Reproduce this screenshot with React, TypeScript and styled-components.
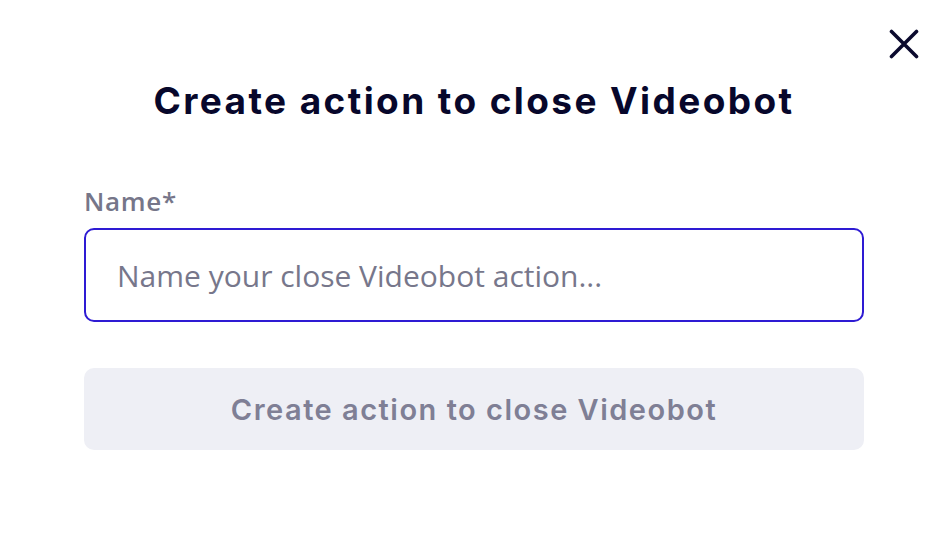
import React from "react";
import styled, { createGlobalStyle } from "styled-components";

const Global = createGlobalStyle`
  html, body { margin: 0; padding: 0; background: #ffffff; }
  body { width: 950px; height: 534px; overflow: hidden; }
  * { box-sizing: border-box; }
`;

const Modal = styled.div`
  position: relative;
  width: 950px;
  height: 534px;
  background: #ffffff;
  padding: 78px 86px 0 84px;
  display: flex;
  flex-direction: column;
`;

const CloseButton = styled.button`
  position: absolute;
  top: 26px;
  right: 28px;
  width: 36px;
  height: 36px;
  padding: 0;
  border: none;
  background: transparent;
  display: flex;
  align-items: center;
  justify-content: center;
  cursor: pointer;
`;

const Title = styled.h1`
  margin: 0;
  text-align: center;
  font-family: Inter, "Noto Sans", sans-serif;
  font-weight: 700;
  font-size: 37px;
  letter-spacing: 2.4px;
  line-height: 46px;
  color: #07072b;
`;

const Field = styled.div`
  display: flex;
  flex-direction: column;
  margin-top: 62px;
`;

const Label = styled.label`
  font-family: "Open Sans", "Noto Sans", sans-serif;
  font-weight: 600;
  font-size: 26px;
  line-height: 30px;
  letter-spacing: 0.7px;
  color: #767689;
  margin-bottom: 12px;
`;

const Input = styled.input`
  width: 780px;
  height: 94px;
  border: 2px solid #2e1bd3;
  border-radius: 10px;
  padding: 0 31px;
  font-family: "Open Sans", "Noto Sans", sans-serif;
  font-size: 30px;
  color: #07072b;
  outline: none;
  &::placeholder { color: #77778b; }
`;

const SubmitButton = styled.button`
  margin-top: 46px;
  width: 780px;
  height: 82px;
  border: none;
  border-radius: 10px;
  background: #eeeff5;
  font-family: Inter, "Noto Sans", sans-serif;
  font-weight: 600;
  font-size: 29px;
  letter-spacing: 1.5px;
  color: #7f7f95;
  cursor: default;
`;

export default function App() {
  return (
    <>
      <Global />
      <Modal>
        <CloseButton aria-label="Close">
          <svg width="30" height="30" viewBox="0 0 30 30" fill="none">
            <path d="M2.5 2.5 L27.5 27.5 M27.5 2.5 L2.5 27.5" stroke="#0b0a2e" strokeWidth="3.6" strokeLinecap="round" />
          </svg>
        </CloseButton>
        <Title>Create action to close Videobot</Title>
        <Field>
          <Label htmlFor="name">Name*</Label>
          <Input id="name" placeholder="Name your close Videobot action..." />
        </Field>
        <SubmitButton disabled>Create action to close Videobot</SubmitButton>
      </Modal>
    </>
  );
}
